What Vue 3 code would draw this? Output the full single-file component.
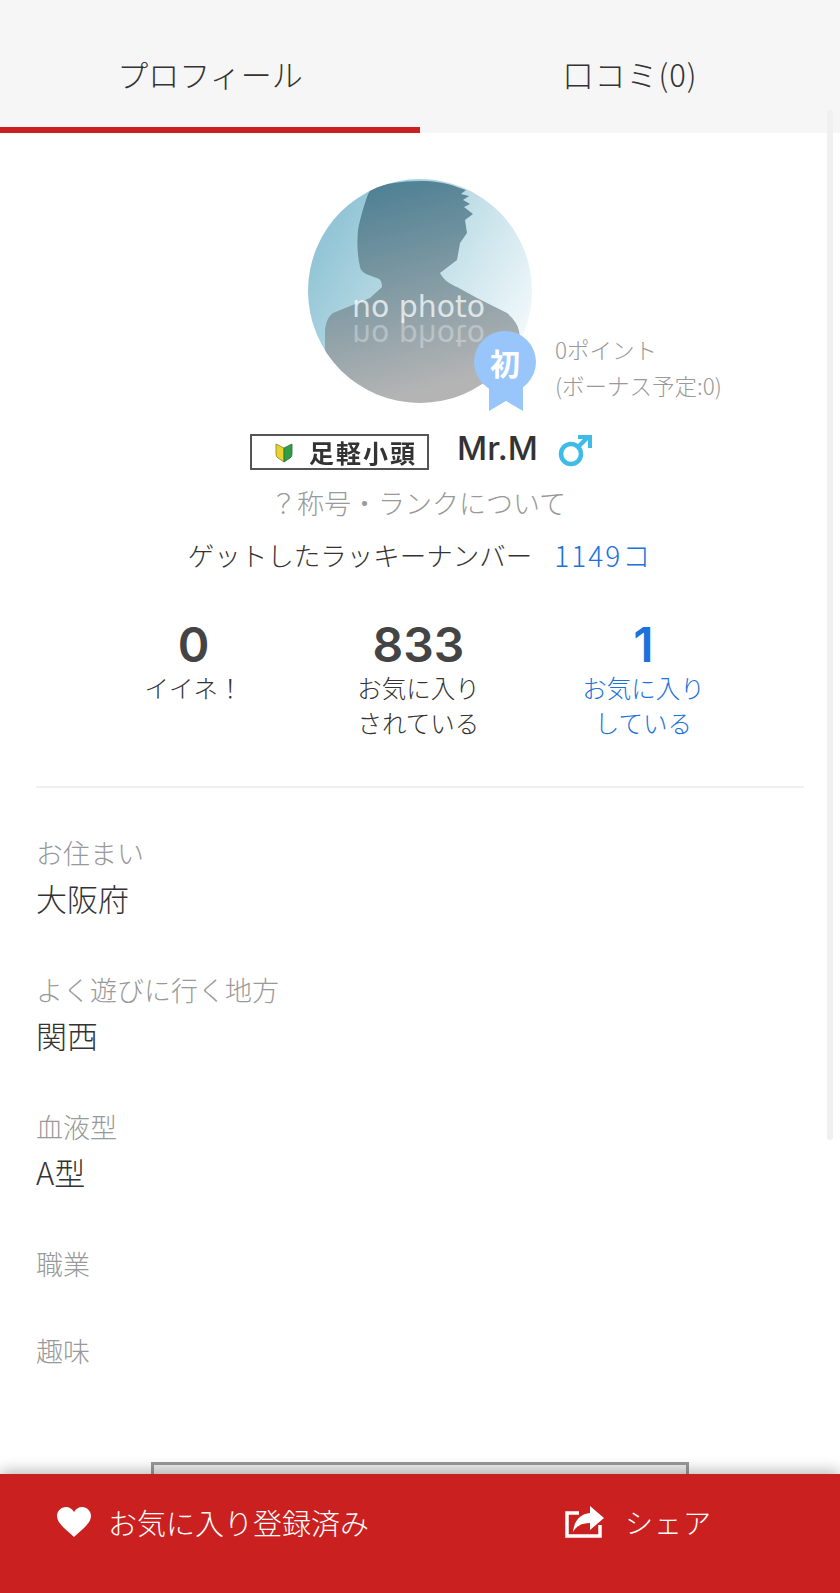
<template>
    <div class="page">
        <div class="tabs">
            <div class="tab active">プロフィール</div>
            <div class="tab wide">口コミ(0)</div>
        </div>

        <section class="profile">
            <div class="avatar-row">
                <div class="avatar">
                    <svg width="224" height="224" viewBox="0 0 224 224">
                        <defs>
                            <linearGradient id="bg" x1="0" y1="0.1" x2="1" y2="0.7">
                                <stop offset="0" stop-color="#84bdd0" />
                                <stop offset="0.55" stop-color="#c2dfe8" />
                                <stop offset="1" stop-color="#f4fafc" />
                            </linearGradient>
                            <linearGradient id="body" x1="0" y1="0" x2="0.25" y2="1">
                                <stop offset="0" stop-color="#467c91" />
                                <stop offset="1" stop-color="#b4b4b4" />
                            </linearGradient>
                            <clipPath id="round"><circle cx="112" cy="112" r="112" /></clipPath>
                        </defs>
                        <g clip-path="url(#round)">
                            <rect width="224" height="224" fill="url(#bg)" />
                            <path fill="url(#body)" d="M64 9 C85 2 125 -2 149 8 L158 11 L153 15 L161 17 L155 21 L162 25 L156 28 L165 35 L157 41 L159 54 L152 64 L149 81 L132 94 C136 102 144 106 149 108 L169 119 L199 134 C206 140 210 146 211 152 L222 224 L40 224 C28 205 17 190 17 168 L17 151 C18 142 21 137 25 134 L62 119 L74 108 C74 102 72 100 69 99 C60 96 53 94 52 88 C49 75 49 62 50 51 C52 40 55 30 57 24 C59 17 61 12 64 9 Z" />
                            <text x="44" y="138" textLength="133" lengthAdjust="spacingAndGlyphs" class="photo-text">no photo</text>
                            <text x="44" y="-146" textLength="133" lengthAdjust="spacingAndGlyphs" class="photo-text mirror" transform="scale(1 -1)">no photo</text>
                        </g>
                    </svg>
                    <div class="ribbon">
                        <svg width="36" height="46" viewBox="0 0 36 46"><path d="M1 0 H35 V46 L18 36 L1 46 Z" fill="#98c6fb" /></svg>
                        <span class="ribbon-face">初</span>
                    </div>
                    <div class="points">0ポイント<br />(ボーナス予定:0)</div>
                </div>
            </div>

            <div class="name-row">
                <div class="rank-plate">
                    <svg width="18" height="21" viewBox="0 0 18 21">
                        <path d="M1 2 L9 6 V20 L3 16 Q1 15 1 12 Z" fill="#e8d22c" stroke="#8a7d2a" stroke-width="0.8" />
                        <path d="M17 2 L9 6 V20 L15 16 Q17 15 17 12 Z" fill="#2f9e44" stroke="#2c6b3a" stroke-width="0.8" />
                    </svg>
                    <span class="rank-name">足軽小頭</span>
                </div>
                <span class="name">Mr.M</span>
                <svg class="gender" width="34" height="34" viewBox="0 0 34 34" fill="none" stroke="#3fbbe8" stroke-width="4.5">
                    <circle cx="13" cy="21" r="10" />
                    <path d="M20 14 L30 4" />
                    <path d="M20 4 H32 V15" stroke-width="4" />
                </svg>
            </div>
            <div class="rank-link">？称号・ランクについて</div>
            <div class="lucky">
                <span>ゲットしたラッキーナンバー</span>
                <span class="blue count">1149コ</span>
            </div>

            <div class="stats">
                <div v-for="s in stats" :key="s.num" class="stat" :class="{ blue: s.link }">
                    <div class="num">{{ s.num }}</div>
                    <div class="stat-label">
                        <div v-for="line in s.lines" :key="line">{{ line }}</div>
                    </div>
                </div>
            </div>
        </section>

        <section class="fields">
            <div v-for="f in fields" :key="f.label" class="field" :class="{ empty: !f.value }">
                <div class="field-label">{{ f.label }}</div>
                <div v-if="f.value" class="field-value">{{ f.value }}</div>
            </div>
        </section>

        <div class="photo-box"></div>

        <div class="scrollbar"></div>

        <div class="footer">
            <div class="footer-btn fav">
                <svg width="36" height="30" viewBox="0 0 36 30"><path d="M18 30 C12 24 1 17 1 9 C1 4 5 0 10 0 C13 0 16 1.5 18 5 C20 1.5 23 0 26 0 C31 0 35 4 35 9 C35 17 24 24 18 30 Z" fill="#fff" /></svg>
                <span>お気に入り登録済み</span>
            </div>
            <div class="footer-btn share">
                <svg width="40" height="32" viewBox="0 0 40 32" fill="none">
                    <path d="M14 7 H2 V30 H35 V19" stroke="#fff" stroke-width="3.5" />
                    <path d="M25 0 L39 12 L25 24 V17 C18 17 12 19 8 26 C9 15 15 8 25 7 Z" fill="#fff" />
                </svg>
                <span class="share-text">シェア</span>
            </div>
        </div>
    </div>
</template>

<script setup>
const stats = [
    { num: '0', lines: ['イイネ！'] },
    { num: '833', lines: ['お気に入り', 'されている'] },
    { num: '1', lines: ['お気に入り', 'している'], link: true },
]

const fields = [
    { label: 'お住まい', value: '大阪府' },
    { label: 'よく遊びに行く地方', value: '関西' },
    { label: '血液型', value: 'A型' },
    { label: '職業', value: '' },
    { label: '趣味', value: '' },
]
</script>

<style>
html, body { margin: 0; background: #fff; }
</style>

<style scoped>
.page {
    position: relative; width: 840px; height: 1593px; overflow: hidden;
    background: #fff; color: #333;
    font-family: "Noto Sans CJK JP", "Noto Sans", sans-serif; font-weight: 300;
}
.tabs { display: flex; height: 133px; background: #f6f6f6; }
.tab {
    flex: 1; box-sizing: border-box; padding-top: 52px; height: 133px;
    text-align: center; font-size: 31px; line-height: 44px;
}
.tab.wide { letter-spacing: 1px; }
.tab.active { border-bottom: 6px solid #cb2020; }

.profile { padding-top: 46px; }
.avatar-row { display: flex; justify-content: center; }
.avatar { position: relative; width: 224px; height: 224px; }
.avatar > svg { display: block; }
.photo-text { font-family: "DejaVu Sans", sans-serif; font-size: 30px; font-weight: 400; fill: rgba(255,255,255,0.72); }
.photo-text.mirror { fill: rgba(255,255,255,0.32); }
.ribbon { position: absolute; left: 166px; top: 152px; width: 64px; height: 80px; }
.ribbon svg { position: absolute; left: 14px; top: 34px; }
.ribbon-face {
    position: absolute; left: 0; top: 0; width: 62px; height: 62px; border-radius: 50%;
    background: #98c6fb; color: #fff; text-align: center;
    font-size: 30px; font-weight: 700; line-height: 62px;
}
.points {
    position: absolute; left: 247px; top: 152px; width: 200px;
    font-size: 22.5px; line-height: 36px; color: #999; white-space: nowrap;
}

.name-row { display: flex; align-items: center; justify-content: center; margin-top: 26px; height: 46px; }
.rank-plate {
    display: flex; align-items: center; box-sizing: border-box; width: 179px; height: 36px;
    border: 2px solid #555; padding-left: 23px; gap: 16px;
    margin-left: 2px;
}
.rank-name {
    font-size: 25px; line-height: 32px; font-weight: 700; letter-spacing: 2px;
    color: #333; white-space: nowrap; filter: blur(0.6px);
}
.name {
    margin-left: 28px; margin-top: -8px;
    font-family: "Inter", sans-serif; font-size: 33px; font-weight: 500; color: #333;
}
.gender { margin-left: 20px; margin-top: -4px; }
.rank-link { margin-top: 7px; padding-right: 4px; text-align: center; font-size: 27px; line-height: 42px; color: #999; }
.lucky { display: flex; justify-content: center; gap: 22px; margin-top: 11px; font-size: 26.5px; line-height: 40px; }
.blue { color: #1b72dc; }
.count { font-size: 28px; letter-spacing: 2px; }

.stats { display: flex; padding: 0 84px 0 81px; margin-top: 42px; }
.stat { flex: 1; text-align: center; }
.num { font-family: "Inter", sans-serif; font-size: 48px; line-height: 56px; font-weight: 600; color: #444; }
.blue .num { color: #1b72dc; }
.stat-label { margin-top: -3px; font-size: 24.5px; line-height: 35px; }

.fields { margin: 46px 36px 0; padding-top: 47px; border-top: 2px solid #f0f0f0; }
.field { height: 137px; }
.field.empty { height: 87px; }
.field-label { font-size: 27px; line-height: 36px; color: #999; }
.field-value { margin-top: 4px; font-size: 31px; line-height: 46px; color: #333; }

.photo-box {
    box-sizing: border-box; width: 538px; height: 200px; margin: 42px auto 0;
    border: 3px solid #999; background: #eee;
}
.scrollbar { position: absolute; right: 7px; top: 110px; width: 6px; height: 1030px; border-radius: 3px; background: #f0f0f0; }

.footer {
    position: absolute; left: 0; right: 0; bottom: 0; height: 119px; display: flex;
    background: #cb2020; color: #fff; box-shadow: 0 -3px 14px rgba(0,0,0,0.28);
    font-size: 29px;
}
.footer-btn { display: flex; align-items: center; gap: 16px; height: 96px; }
.fav { margin-left: 56px; width: 509px; }
.share-text { font-size: 28px; letter-spacing: 1px; margin-left: 4px; }
</style>
